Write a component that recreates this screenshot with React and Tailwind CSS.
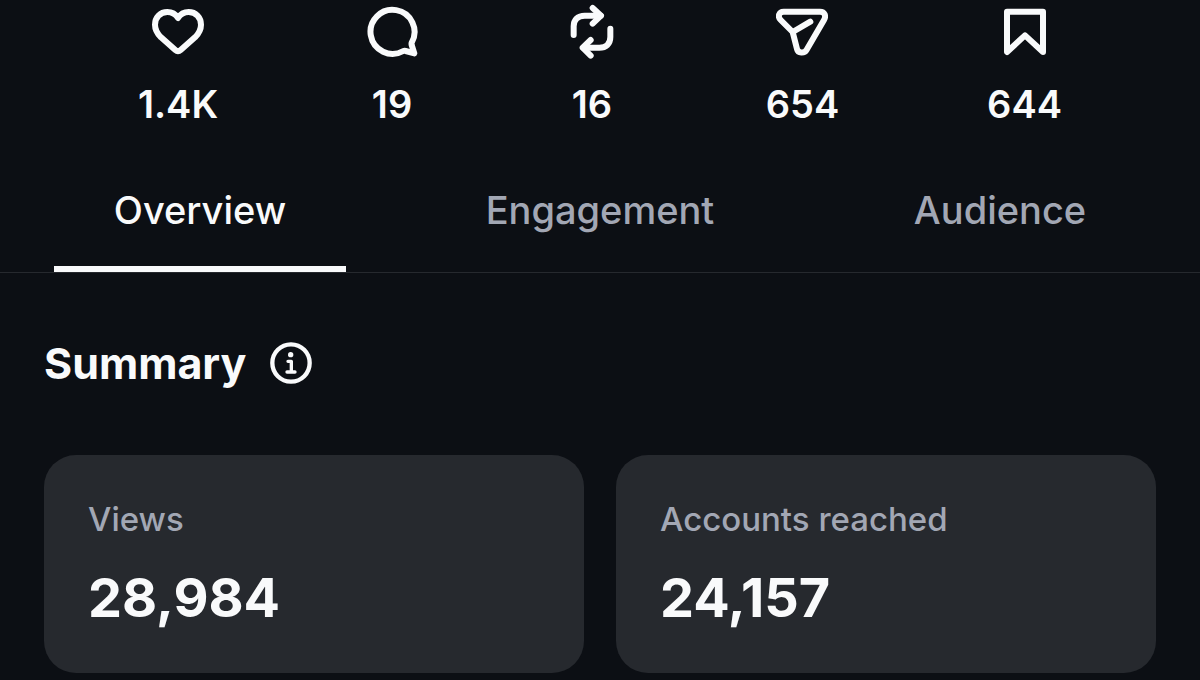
import { useState } from 'react';

function StatIcon({ children }) {
  return (
    <svg
      className="w-13 h-14"
      viewBox="0 0 156 168"
      fill="none"
      stroke="currentColor"
      strokeWidth={18}
      strokeLinecap="round"
      strokeLinejoin="round"
      aria-hidden="true"
    >
      {children}
    </svg>
  );
}

const stats = [
  {
    label: 'Likes',
    value: '1.4K',
    icon: (
      <path d="M78 42C70 29 58 24 46 24C25 24 9 40 9 62C9 78 17 90 27 100L70 138Q78 145 86 138L129 100C139 90 147 78 147 62C147 40 131 24 110 24C98 24 86 29 78 42Z" />
    ),
  },
  {
    label: 'Comments',
    value: '19',
    icon: <path d="M137 116A66 66 0 1 0 112 141Q115 140 119 141L145 148L137 123Q136 119 137 116Z" />,
  },
  {
    label: 'Reposts',
    value: '16',
    icon: (
      <>
        <path d="M23 93V67C23 46 36 35 56 35H104" />
        <path d="M80 12L105 35L80 59" />
        <path d="M133 74V99C133 120 120 131 100 131H52" />
        <path d="M74 108L50 131L74 155" />
      </>
    ),
  },
  {
    label: 'Shares',
    value: '654',
    icon: (
      <>
        <path d="M23 23H132C146 23 151 36 144 48L92 137C85 149 66 148 63 135L50 84L14 48C4 38 9 23 23 23Z" />
        <path d="M50 84L103 53" />
      </>
    ),
  },
  {
    label: 'Saves',
    value: '644',
    icon: <path d="M24 23H132V144L78 94L24 144Z" />,
  },
];

const tabs = ['Overview', 'Engagement', 'Audience'];

const summary = [
  { label: 'Views', value: '28,984' },
  { label: 'Accounts reached', value: '24,157' },
];

export default function App() {
  const [activeTab, setActiveTab] = useState('Overview');

  return (
    <div className="min-h-screen bg-[#0c0f14] font-['Inter',sans-serif] text-[#f9fafb]">
      {/* Post stats */}
      <ul className="flex justify-around px-16 pt-1">
        {stats.map(stat => (
          <li key={stat.label} aria-label={stat.label} className="flex min-w-13 flex-col items-center gap-5">
            <StatIcon>{stat.icon}</StatIcon>
            <span className="text-[38px] leading-12 font-semibold">{stat.value}</span>
          </li>
        ))}
      </ul>

      {/* Tabs */}
      <div role="tablist" className="mt-[26px] flex border-b border-[#26292e]">
        {tabs.map(tab => (
          <button
            key={tab}
            type="button"
            role="tab"
            aria-selected={activeTab === tab}
            onClick={() => setActiveTab(tab)}
            className={`flex flex-1 flex-col items-center text-[38px] leading-12 font-medium ${
              activeTab === tab ? 'text-[#f9fafb]' : 'text-[#a2a7b4]'
            }`}
          >
            <span className="py-8">{tab}</span>
            <span className={`h-1.5 w-73/100 ${activeTab === tab ? 'bg-[#f9fafb]' : 'bg-transparent'}`} />
          </button>
        ))}
      </div>

      {/* Summary */}
      <section className="px-11 pt-[62px] pb-1.5">
        <div className="flex items-center gap-6">
          <h2 className="text-[43px] leading-14 font-bold">Summary</h2>
          <button type="button" aria-label="About this summary">
            <svg className="size-[42px]" viewBox="0 0 126 126" fill="none" stroke="currentColor" aria-hidden="true">
              <circle cx="63" cy="63" r="56" strokeWidth="13" />
              <circle cx="62" cy="38" r="8" fill="currentColor" stroke="none" />
              <path d="M54 58H64V90M51 90H75" strokeWidth="10" strokeLinecap="round" strokeLinejoin="round" />
            </svg>
          </button>
        </div>

        <dl className="mt-16 grid grid-cols-2 gap-8">
          {summary.map(item => (
            <div key={item.label} className="rounded-4xl bg-[#26292e] px-11 py-10">
              <dt className="text-[33px] leading-12 font-medium text-[#a2a7b4]">{item.label}</dt>
              <dd className="mt-5 text-[54px] leading-[70px] font-bold">{item.value}</dd>
            </div>
          ))}
        </dl>
      </section>
    </div>
  );
}
